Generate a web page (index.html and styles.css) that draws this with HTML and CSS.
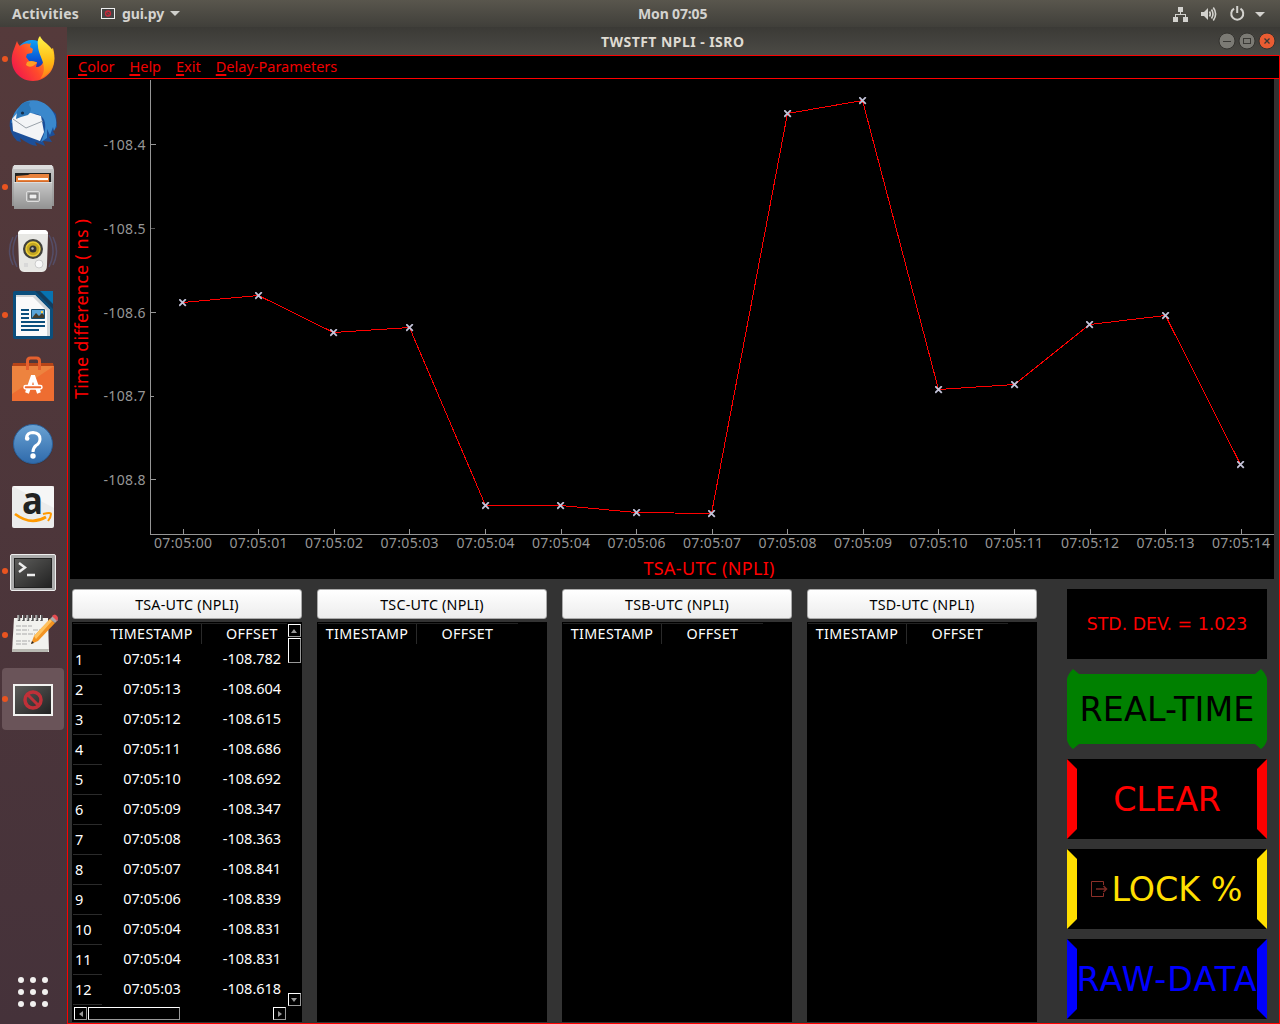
FILE: index.html
```html
<!DOCTYPE html>
<html lang="en">
<head>
<meta charset="utf-8">
<title>TWSTFT NPLI - ISRO</title>
<link rel="stylesheet" href="styles.css">
</head>
<body>
<header class="topbar">
  <span class="activities">Activities</span>
  <svg class="app-icon" width="14" height="11" viewBox="0 0 14 11"><rect x=".5" y=".5" width="13" height="10" fill="#444" stroke="#eee"/><circle cx="7" cy="5.500" r="2.500" fill="none" stroke="#c9283a" stroke-width="1.300"/><path d="M5.500 4l3 3" stroke="#c9283a"/></svg>
  <span class="app-name">gui.py</span>
  <svg class="app-caret" width="10" height="5" viewBox="0 0 10 5"><path d="M0 0h10L5 5z" fill="#d0d0cc"/></svg>
  <span class="clock">Mon 07:05</span>
  <svg class="tray" width="94" height="18" viewBox="0 0 94 18">
    <g fill="#d3d2ce"><path d="M5 2h5v5H5zM0 12h5v5H0zM10 12h5v5h-5z"/><path d="M7 7h1v2h5v3h-1v-2H3v2H2V9h5z"/>
    <path d="M28 7h3l4-4v12l-4-4h-3z"/><path d="M87 7h10l-5 5z" transform="translate(-5)"/></g>
    <g fill="none" stroke="#d3d2ce" stroke-width="1.600"><path d="M36.500 6.500q1.600 2.500 0 5M38.500 4.500q3 4.500 0 9M40.300 2.500q4.600 6.500 0 13"/><path d="M61 3.600a6 6 0 1 0 6.500 0M64.200 1v7" stroke-width="2"/></g>
  </svg>
</header>
<div class="desktop">
<nav class="launcher">
  <div class="item running"><svg width="48" height="48" viewBox="0 0 48 48">
    <defs>
      <linearGradient id="fx" x1="0" y1=".8" x2="1" y2=".2"><stop offset="0" stop-color="#f0134f"/><stop offset=".45" stop-color="#ff4b2b"/><stop offset="1" stop-color="#ffc21a"/></linearGradient>
      <linearGradient id="tail" x1="0" y1="0" x2="0" y2="1"><stop offset="0" stop-color="#fff44a"/><stop offset=".6" stop-color="#ffb912"/><stop offset="1" stop-color="#ff7a1c"/></linearGradient>
      <linearGradient id="gl" x1="0" y1="0" x2="0" y2="1"><stop offset="0" stop-color="#12a2f5"/><stop offset=".6" stop-color="#0757d6"/><stop offset="1" stop-color="#3a1a86"/></linearGradient>
      <linearGradient id="gray" x1="0" y1="0" x2="0" y2="1"><stop offset="0" stop-color="#c8c8c8"/><stop offset="1" stop-color="#929292"/></linearGradient>
      <linearGradient id="term" x1="0" y1="0" x2="1" y2="1"><stop offset="0" stop-color="#5c5c5a"/><stop offset="1" stop-color="#222"/></linearGradient>
    </defs>
    <circle cx="23" cy="21" r="16" fill="url(#gl)"/>
    <path d="M8 6C9 9 10 10 11 11 14 9 17 8 20 9L22 8 21 12 24 14 23 18 18 19 17 22 21 27 28 27 27 32C33 33 36 25 35 19L44 13C50 34 37 46 24 46 8 46-2 30 5 14Z" fill="url(#fx)"/>
    <path d="M18 27q4-2 9 0l1 1-4 3q-4 2-7-1z" fill="#ff9d23"/>
    <path d="M31 1C33 6 38 8 42 13 49 24 44 38 31 44 41 32 29 21 29 11 28 7 29 3 31 1Z" fill="url(#tail)"/></svg></div>
  <div class="item"><svg width="48" height="48" viewBox="0 0 48 48">
    <path d="M1 21Q-1 33 8 42L12 43 11 39Q20 46 28 47L26 43 36 47 34 42 43 43 40 38 46 36 44 32 48 28 47 15 40 8Z" fill="#1c4f99"/>
    <path d="M11 7C18-1 31 0 39 7 48 15 49 26 45 32L44 28 41 36 38 30 38 39 32 43C42 22 33 13 22 15L2 24Q4 13 11 7Z" fill="#3a88cc"/>
    <path d="M3 20L10 12 22 14 32 17 35 33 31 42 20 38 4 32Z" fill="#f3f4f6"/><path d="M4 20l13 9 17-7" fill="none" stroke="#9aa2aa"/>
    <path d="M8 13Q12 1 21 3L20 6Q24 11 19 16L12 18 7 20Z" fill="#2b77b9"/><circle cx="13.500" cy="14" r="1.600" fill="#17304c"/></svg></div>
  <div class="item running"><svg width="48" height="48" viewBox="0 0 48 48">
    <path d="M4 3h40l1 4v36H3V7z" fill="url(#gray)"/><path d="M5 2h38l1 4H4z" fill="#ddd"/>
    <path d="M6 10h36v10H6z" fill="#222"/><path d="M7 13l12-1 2-1h19v9H7z" fill="#e8823d"/><path d="M9 15h30v2H9z" fill="#fff"/><path d="M9 18h31v2H9z" fill="#d56b2a"/>
    <path d="M5 19h38v27H5z" fill="url(#gray)"/><path d="M5 19.500h38" stroke="#ddd"/><rect x="17.500" y="28.500" width="13" height="10" rx="1.500" fill="#aaa" stroke="#ddd"/><rect x="20" y="31" width="8" height="5" fill="#eee" stroke="#666"/></svg></div>
  <div class="item"><svg width="48" height="48" viewBox="0 0 48 48">
    <g fill="none" stroke="#56577a" stroke-width="1.500" opacity=".7"><path d="M4 10Q-3 24 4 38M8 8Q0 24 8 40M44 10Q51 24 44 38M40 8Q48 24 40 40"/></g>
    <path d="M13 3h22q4 0 4 5l-1 30q0 7-5 7H15q-5 0-5-7L9 8q0-5 4-5z" fill="#e7e7e4"/><path d="M13 3h22q4 0 4 4H9q0-4 4-4z" fill="#fff"/>
    <circle cx="24" cy="22" r="10" fill="#41413c"/><circle cx="24" cy="22" r="7" fill="#c4a722" stroke="#eecf3a" stroke-width="1.500"/><circle cx="24" cy="22" r="3.500" fill="#333"/><circle cx="23.500" cy="21.500" r="1.200" fill="#bbb"/><circle cx="30" cy="37" r="4" fill="#f8f8f8" stroke="#ccc"/><rect x="15" y="36" width="4" height="4" fill="#d8d8d8"/></svg></div>
  <div class="item running"><svg width="48" height="48" viewBox="0 0 48 48">
    <path d="M6 0h36q2 0 2 2v44q0 2-2 2H6q-2 0-2-2V2q0-2 2-2z" fill="#0b4f7d"/><path d="M27 0h15q2 0 2 2v14z" fill="#0470ae"/><path d="M26 0h5l13 13v5z" fill="#153c5b"/><path d="M32 0h12v12z" fill="#0873b0"/>
    <path d="M7 4h19l15 15v26H7z" fill="#fafafa"/><path d="M26 4l15 15v26h-3V20L24 6H7V4z" fill="#d2d6d8"/>
    <path d="M12 18h8v2h-8zM12 22h8v2h-8zM12 26h8v2h-8zM12 30h24v2H12zM12 34h24v2H12zM12 38h18v2H12z" fill="#0b4f7d"/><path d="M22.500 18.500h13v9h-13z" fill="#5ba5d8" stroke="#164e73"/><path d="M23 27l4-5 3 3 3-3 2 2v3z" fill="#443d2b"/><circle cx="33" cy="21" r="1.200" fill="#ffd14a"/></svg></div>
  <div class="item"><svg width="48" height="48" viewBox="0 0 48 48">
    <path d="M4 8h40l1 4H3z" fill="#b64418"/><path d="M3 11h42v35H3z" fill="#ee6d31"/><path d="M3 11h42L3 39z" fill="#ec8843" opacity=".8"/>
    <path d="M18.500 15V6q0-3 3-3h6q3 0 3 3v9" fill="none" stroke="#e5602e" stroke-width="3"/>
    <path d="M18 38L23.500 22h1L30 38" fill="none" stroke="#fff" stroke-width="4"/><rect x="15" y="30.500" width="18" height="3.500" rx="1.700" fill="#ef6a2f" stroke="#fff" stroke-width="1.500"/></svg></div>
  <div class="item"><svg width="48" height="48" viewBox="0 0 48 48">
    <defs><linearGradient id="help" x1="0" y1="0" x2="0" y2="1"><stop offset="0" stop-color="#6aa2d3"/><stop offset="1" stop-color="#2f6aab"/></linearGradient></defs>
    <circle cx="24" cy="25.500" r="20" fill="#31292c" opacity=".5"/><circle cx="24" cy="25" r="19.500" fill="url(#help)" stroke="#2b609a"/><path d="M17.500 19Q18 13.500 24 13.500 31 14 31 20 31 24 27 26.500 24 29 24 33" fill="none" stroke="#fff" stroke-width="3"/><circle cx="18.200" cy="19.500" r="2.300" fill="#fff"/><circle cx="24" cy="37" r="2.700" fill="#fff"/></svg></div>
  <div class="item"><svg width="48" height="48" viewBox="0 0 48 48">
    <rect x="3" y="3" width="42" height="42" rx="2" fill="#ececec"/><path d="M3 3h42v22z" fill="#fff" opacity=".5"/>
    <text class="amazon" x="13" y="31" textLength="21" lengthAdjust="spacingAndGlyphs">a</text>
    <path d="M6 31Q22 43 37 34" fill="none" stroke="#ff9900" stroke-width="2.800"/><path d="M34 31Q42 29 42 31 42 34 39 38" fill="none" stroke="#ff9900" stroke-width="2"/></svg></div>
  <div class="item running"><svg width="48" height="48" viewBox="0 0 48 48"><g transform="translate(0 3)">
    <rect x="1.500" y="4.500" width="45" height="36" rx="1.500" fill="#aaa" stroke="#eee"/><rect x="5" y="8" width="38" height="30" fill="#222"/><rect x="6" y="9" width="36" height="28" fill="url(#term)"/><path d="M10 13l6 4.500-6 4.500M18 25h8" fill="none" stroke="#eee" stroke-width="2.400"/></g></svg></div>
  <div class="item running"><svg width="48" height="48" viewBox="0 0 48 48">
    <path d="M5 7h34l1 34H3z" fill="#f2f2ee"/><path d="M3 38h37l-1 3H3z" fill="#b9b9b2"/>
    <path d="M10 4v6M14.500 4v6M19 4v6M23.500 4v6M28 4v6M32.500 4v6" stroke="#555" stroke-width="2.500"/><path d="M9 4v5M13.500 4v5M18 4v5M22.500 4v5M27 4v5M31.500 4v5" stroke="#eee"/>
    <path d="M7 15h16M7 19h13M24 19h10M7 23h19M7 30h14M7 33h11" stroke="#aaa" stroke-dasharray="5 1"/>
    <path d="M22 33l3-8L41 8l5 4-17 18z" fill="#f39422"/><path d="M25 25L41 8l2 2-16 18z" fill="#ffc35f"/><path d="M41 8l3-3 5 4-3 3z" fill="#aaa"/><path d="M43 5q3-3 5 0 2 2 0 5z" fill="#e54b50"/><path d="M22 33l1-3 2 2z" fill="#222"/></svg></div>
  <div class="item running active"><svg width="48" height="48" viewBox="0 0 48 48">
    <rect x="5" y="10" width="38" height="30" fill="#555" stroke="#f2f2f0" stroke-width="2"/><rect x="6" y="11" width="36" height="28" fill="url(#term)"/><circle cx="24" cy="25" r="8" fill="none" stroke="#bf3038" stroke-width="3.500"/><path d="M18.500 19.500l11 11" stroke="#bf3038" stroke-width="3"/></svg></div>
  <svg class="show-apps" width="30" height="30" viewBox="0 0 30 30"><g fill="#f1f0ef"><circle cx="3" cy="3" r="3"/><circle cx="15" cy="3" r="3"/><circle cx="27" cy="3" r="3"/><circle cx="3" cy="15" r="3"/><circle cx="15" cy="15" r="3"/><circle cx="27" cy="15" r="3"/><circle cx="3" cy="27" r="3"/><circle cx="15" cy="27" r="3"/><circle cx="27" cy="27" r="3"/></g></svg>
</nav>
<section class="window">
  <div class="titlebar"><span class="title">TWSTFT NPLI - ISRO</span>
    <svg class="controls" width="58" height="18" viewBox="0 0 58 18"><g stroke="#34332f"><circle cx="9" cy="9" r="8" fill="#7b7a74"/><circle cx="29" cy="9" r="8" fill="#7b7a74"/><circle cx="49" cy="9" r="8" fill="#ea5c32"/></g><g fill="none" stroke="#3a3935"><path d="M5 9.500h8"/><rect x="25.500" y="6.500" width="7" height="5"/><path d="M46.500 6.500l5 5m0-5l-5 5" stroke-width="1.300"/></g></svg>
  </div>
  <div class="frame">
    <div class="menubar"><span><u>C</u>olor</span><span><u>H</u>elp</span><span><u>E</u>xit</span><span><u>D</u>elay-Parameters</span></div>
    <svg class="plot" width="1204" height="500" viewBox="70 79 1204 500">
      <path class="axis" d="M150.500 80V534.500H1274M150 144.500h6M150 312.500h6M150 396.500h4M150 479.500h6M183.500 529v5M258.500 529v5M334.500 529v5M409.500 529v5M485.500 529v5M561.500 529v5M636.500 529v5M712.500 529v5M787.500 529v5M863.500 529v5M938.500 529v5M1014.500 529v5M1090.500 529v5M1165.500 529v5M1241.500 529v5"/>
      <path class="axis faint" d="M151 228.500h4"/>
      <g class="tick ylab"><text x="103.500" y="150" textLength="42">-108.4</text><text x="103.500" y="234" textLength="42">-108.5</text><text x="103.500" y="318" textLength="42">-108.6</text><text x="103.500" y="401" textLength="42">-108.7</text><text x="103.500" y="485" textLength="42">-108.8</text></g>
      <g class="tick"><text x="154" y="548" textLength="58">07:05:00</text><text x="229.500" y="548" textLength="58">07:05:01</text><text x="305" y="548" textLength="58">07:05:02</text><text x="380.500" y="548" textLength="58">07:05:03</text><text x="456.500" y="548" textLength="58">07:05:04</text><text x="532" y="548" textLength="58">07:05:04</text><text x="607.500" y="548" textLength="58">07:05:06</text><text x="683" y="548" textLength="58">07:05:07</text><text x="758.500" y="548" textLength="58">07:05:08</text><text x="834" y="548" textLength="58">07:05:09</text><text x="909.500" y="548" textLength="58">07:05:10</text><text x="985" y="548" textLength="58">07:05:11</text><text x="1061" y="548" textLength="58">07:05:12</text><text x="1136.500" y="548" textLength="58">07:05:13</text><text x="1212" y="548" textLength="58">07:05:14</text></g>
      <text class="label" x="643.500" y="575" textLength="131">TSA-UTC (NPLI)</text>
      <text class="label" transform="translate(88 399) rotate(-90)" textLength="180">Time difference ( ns )</text>
      <defs><marker id="m" viewBox="-4 -4 8 8" markerWidth="8" markerHeight="8" markerUnits="userSpaceOnUse"><path d="M-3.300-3.300L3.300 3.300M3.300-3.300L-3.300 3.300" stroke="#c4c4da" stroke-width="1.800"/></marker></defs>
      <polyline class="series" points="182.500,302.500 258.500,295.500 333.500,332.500 409.500,327.500 485.500,505.500 560.500,505.500 636.500,512.500 711.500,513.500 787.500,113.500 862.500,100.500 938.500,389.500 1014.500,384.500 1089.500,324.500 1165.500,315.500 1240.500,464.500"/>
    </svg>
    <div class="lower">
      <div class="channel">
        <button>TSA-UTC (NPLI)</button>
        <div class="table full">
          <div class="view">
            <div class="head"><i></i><b>TIMESTAMP</b><b>OFFSET</b></div>
            <div class="row"><i>1</i><span>07:05:14</span><span>-108.782</span></div>
            <div class="row"><i>2</i><span>07:05:13</span><span>-108.604</span></div>
            <div class="row"><i>3</i><span>07:05:12</span><span>-108.615</span></div>
            <div class="row"><i>4</i><span>07:05:11</span><span>-108.686</span></div>
            <div class="row"><i>5</i><span>07:05:10</span><span>-108.692</span></div>
            <div class="row"><i>6</i><span>07:05:09</span><span>-108.347</span></div>
            <div class="row"><i>7</i><span>07:05:08</span><span>-108.363</span></div>
            <div class="row"><i>8</i><span>07:05:07</span><span>-108.841</span></div>
            <div class="row"><i>9</i><span>07:05:06</span><span>-108.839</span></div>
            <div class="row"><i>10</i><span>07:05:04</span><span>-108.831</span></div>
            <div class="row"><i>11</i><span>07:05:04</span><span>-108.831</span></div>
            <div class="row"><i>12</i><span>07:05:03</span><span>-108.618</span></div>
          </div>
          <div class="vscroll"><div class="arrow"><svg width="6" height="4"><path d="M0 4h6L3 0z" fill="#999"/></svg></div><div class="thumb"></div><div class="arrow end"><svg width="6" height="4"><path d="M0 0h6L3 4z" fill="#999"/></svg></div></div>
          <div class="hscroll"><div class="arrow"><svg width="4" height="6"><path d="M4 0v6L0 3z" fill="#999"/></svg></div><div class="thumb"></div><div class="arrow end"><svg width="4" height="6"><path d="M0 0v6l4-3z" fill="#999"/></svg></div></div>
        </div>
      </div>
      <div class="channel"><button>TSC-UTC (NPLI)</button><div class="table"><div class="head"><b>TIMESTAMP</b><b>OFFSET</b></div></div></div>
      <div class="channel"><button>TSB-UTC (NPLI)</button><div class="table"><div class="head"><b>TIMESTAMP</b><b>OFFSET</b></div></div></div>
      <div class="channel"><button>TSD-UTC (NPLI)</button><div class="table"><div class="head"><b>TIMESTAMP</b><b>OFFSET</b></div></div></div>
      <div class="actions">
        <div class="stddev">STD. DEV. = 1.023</div>
        <div class="big realtime"><svg width="200" height="80"><path d="M0 10Q1 5 6 0L12 5H188L194 0Q199 5 200 10V71Q199 76 194 80L188 75H12L6 80Q1 76 0 71Z" fill="#008000"/></svg><span>REAL-TIME</span></div>
        <div class="big clear"><span>CLEAR</span></div>
        <div class="big lock"><svg width="17" height="16" viewBox="0 0 17 16"><path d="M12.500 4V.5H.5v15h12V12" fill="none" stroke="#8c2f28"/><path d="M5 8h10M12.500 5l3 3-3 3" fill="none" stroke="#7c2a24" stroke-width="1.500"/></svg><span>LOCK %</span></div>
        <div class="big raw"><span>RAW-DATA</span></div>
      </div>
    </div>
  </div>
</section>
</div>
</body>
</html>
```
FILE: styles.css
```css
* { box-sizing: border-box; }
body { margin: 0; width: 1280px; height: 1024px; overflow: hidden; background: #333; font: 14.5px "Noto Sans", sans-serif; }
svg { display: block; flex: none; }
.topbar { height: 27px; display: flex; align-items: center; background: linear-gradient(#59564d, #403f3a); color: #d4d3cf; font-size: 14px; font-weight: 700; line-height: 26px; white-space: nowrap; }
.activities { width: 89px; padding-left: 12px; letter-spacing: .2px; }
.app-icon { margin-left: 12px; }
.app-name { width: 43px; margin-left: 7px; letter-spacing: -.1px; }
.app-caret { margin-left: 5px; }
.clock { margin-left: 458px; width: 72px; letter-spacing: -.15px; }
.tray { margin-left: 463px; }
.desktop { display: flex; height: 997px; }
.launcher { width: 67px; background: linear-gradient(#553a3b, #45323a); display: flex; flex-direction: column; align-items: center; }
.item { width: 67px; height: 64px; display: flex; align-items: center; }
.item svg { margin-left: 1px; overflow: visible; }
.item::before { content: ""; width: 6px; height: 6px; margin-left: 2px; flex: none; border-radius: 50%; }
.item.running::before { background: #e95420; }
.item.active { width: 62px; height: 62px; margin: 1px 3px 1px 2px; align-self: flex-start; border-radius: 4px; background: #6a5459; }
.item.active::before { margin-left: 0; }
.show-apps { margin: 246px 1px 0 0; }
.window { flex: 1; }
.titlebar { height: 28px; background: linear-gradient(#3b3a36, #4b4a45); display: flex; align-items: center; padding-left: 534px; }
.title { color: #dfdbd2; font-size: 14px; letter-spacing: .45px; font-weight: 700; width: 146px; white-space: nowrap; }
.controls { margin-left: 471px; }
.frame { height: 969px; border: 1px solid #f00; background: #333; }
.menubar { height: 23px; background: #000; border-bottom: 1px solid #f00; display: flex; gap: 15px; padding-left: 10px; color: #f00000; font-size: 14.500px; line-height: 21px; white-space: nowrap; }
.menubar u { text-underline-offset: 2px; text-decoration-thickness: 2px; text-decoration-skip-ink: none; }
.plot { margin-left: 2px; background: #000; font-family: "Noto Sans", sans-serif; }
.axis { fill: none; stroke: #969696; shape-rendering: crispEdges; }
.faint { stroke: #555; }
.tick { fill: #969696; font-size: 14px; }
.label { fill: #f00; font-size: 18px; }
.series { fill: none; stroke: #f00; shape-rendering: crispEdges; marker: url(#m); }
.amazon { font: bold 37px "Open Sans", sans-serif; fill: #222; }
.lower { display: flex; gap: 15px; padding: 10px 0 0 4px; }
.channel { width: 230px; }
button { display: block; width: 230px; height: 30px; padding: 0; border: 1px solid #aaa; border-radius: 3px; background: linear-gradient(#fff, #ededed); color: #000; font: 14.300px/29px "Noto Sans", sans-serif; letter-spacing: .2px; }
.table { height: 400px; margin-top: 3px; background: #000; color: #fff; padding: 1px; overflow: hidden; }
.head { width: 200px; height: 21px; display: grid; grid-template-columns: 99px 101px; border-top: 1px solid #222; line-height: 20px; text-align: center; }
.head b { font-weight: 400; font-size: 14.300px; letter-spacing: .35px; white-space: nowrap; }
.head b:nth-last-child(2) { border-right: 1px solid #292929; }
.table.full { display: grid; grid-template: 383px 15px / 214px 14px; }
.view { overflow: hidden; }
.full .head, .row { width: 230px; display: grid; grid-template-columns: 29px 100px 100px; }
.row { height: 30px; line-height: 28px; text-align: center; }
.row i { height: 31px; font-style: normal; text-align: left; padding-left: 2px; border-top: 1px solid #2b2b2b; line-height: 29px; }
.row:last-child i { border-bottom: 1px solid #2b2b2b; }
.vscroll { display: flex; flex-direction: column; align-items: center; padding: 1px 0 0; }
.arrow { width: 13px; height: 13px; flex: none; border: 1px solid; border-color: #fff #999 #999 #fff; display: flex; align-items: center; justify-content: center; }
.thumb { border: 1px solid; border-color: #fff #999 #999 #fff; }
.vscroll .thumb { width: 13px; height: 25px; margin-top: 1px; }
.vscroll .end { margin-top: auto; }
.hscroll { display: flex; padding: 1px 1px 0 1px; }
.hscroll .thumb { width: 92px; height: 13px; margin-left: 1px; }
.hscroll .end { margin-left: auto; }
.actions { width: 200px; margin-left: 15px; display: flex; flex-direction: column; gap: 10px; font-family: "DejaVu Sans", sans-serif; }
.stddev { height: 70px; background: #000; color: #f00; font-size: 17.330px; line-height: 70px; text-align: center; white-space: nowrap; }
.big { height: 80px; font-size: 33.330px; line-height: 60px; display: flex; justify-content: center; white-space: nowrap; background: #000; border: 10px solid #000; align-items: center; }
.big span { padding-top: 2px; }
.realtime { background: none; border: 0; color: #000; display: grid; }
.realtime > * { grid-area: 1 / 1; }
.realtime span { text-align: center; letter-spacing: .1px; }
.clear { color: #f00; border-left-color: #f00; border-right-color: #f00; letter-spacing: -.3px; }
.lock { color: #ffdf00; border-left-color: #ffdf00; border-right-color: #ffdf00; }
.lock svg { margin-right: 3px; }
.raw { color: #00f; border-left-color: #00f; border-right-color: #00f; letter-spacing: 1.100px; }
```
